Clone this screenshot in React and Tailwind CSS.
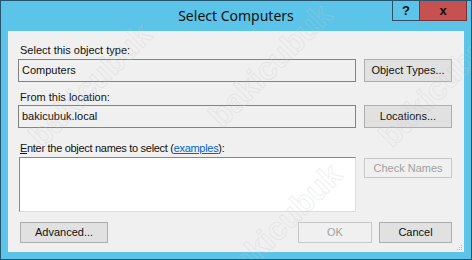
export default function App() {
  const wm = "text-[32px] font-bold text-transparent [-webkit-text-stroke:1px_rgba(200,200,200,0.3)] -rotate-45 whitespace-nowrap pointer-events-none select-none absolute [font-family:'Liberation_Sans',Arial,sans-serif]";
  return (
    <div className="relative w-[472px] h-[260px] overflow-hidden bg-[#5cc4e8] border border-[#24566f] flex flex-col [font-family:'Liberation_Sans',Arial,sans-serif] text-[11px] text-[#111]">
      {/* title bar */}
      <div className="relative h-[30px] shrink-0 flex items-center justify-center">
        <span className="text-[14px] text-[#111] [font-family:'Noto_Sans','Open_Sans',sans-serif] mt-[-1px]">Select Computers</span>
        <div className="absolute top-0 right-[4px] flex">
          <div className="w-[28px] h-[20px] border border-[#2b5168] border-t-0 flex items-center justify-center font-bold text-[13px] text-[#111]">?</div>
          <div className="w-[47px] h-[20px] bg-[#c75050] border-b border-r border-[#7a3030] flex items-center justify-center font-bold text-[13px] text-[#111]">x</div>
        </div>
      </div>
      {/* client */}
      <div className="relative mx-[7px] mb-[7px] flex-1 bg-[#f0f0f0] px-[10px] pt-[12px] flex flex-col">
        <div className="h-[14px] leading-[14px] pl-[2px]">Select this object type:</div>
        <div className="mt-[2px] flex gap-[8px]">
          <div className="w-[338px] h-[23px] border border-[#828282] bg-[#f0f0f0] px-[3px] leading-[21px]">Computers</div>
          <div className="w-[88px] h-[23px] border border-[#adadad] bg-[#e1e1e1] flex items-center justify-center">Object Types...</div>
        </div>
        <div className="mt-[8px] h-[14px] leading-[14px] pl-[2px]">From this location:</div>
        <div className="mt-[1px] flex gap-[8px]">
          <div className="w-[338px] h-[23px] border border-[#828282] bg-[#f0f0f0] px-[3px] leading-[21px]">bakicubuk.local</div>
          <div className="w-[88px] h-[23px] border border-[#adadad] bg-[#e1e1e1] flex items-center justify-center">Locations...</div>
        </div>
        <div className="mt-[13px] h-[14px] leading-[14px] pl-[2px] tracking-[-0.3px]">
          <span className="underline">E</span>nter the object names to select (<span className="text-[#0066cc] underline">examples</span>):
        </div>
        <div className="mt-[2px] flex">
          <div className="ml-[1px] w-[337px] h-[55px] bg-white border border-[#dcdcdc] border-t-[#828790] border-l-[#828790]"></div>
          <div className="ml-[8px] mt-[1px] w-[88px] h-[20px] border border-[#c8c8c8] bg-[#f0f0f0] text-[#a0a0a0] flex items-center justify-center">Check Names</div>
        </div>
        <div className="mt-[10px] flex">
          <div className="ml-[2px] w-[88px] h-[21px] border border-[#adadad] bg-[#e1e1e1] flex items-center justify-center">Advanced...</div>
          <div className="ml-auto w-[74px] h-[21px] border border-[#c8c8c8] bg-[#f0f0f0] text-[#a0a0a0] flex items-center justify-center">OK</div>
          <div className="ml-[7px] mr-[2px] w-[73px] h-[21px] border border-[#adadad] bg-[#e1e1e1] flex items-center justify-center">Cancel</div>
        </div>
        <div className="absolute right-[1px] bottom-[1px] w-[6px] h-[6px] grid grid-cols-3">
          <span></span><span></span><span className="w-[1px] h-[1px] bg-[#bcbcbc]"></span>
          <span></span><span className="w-[1px] h-[1px] bg-[#bcbcbc]"></span><span className="w-[1px] h-[1px] bg-[#bcbcbc]"></span>
          <span className="w-[1px] h-[1px] bg-[#bcbcbc]"></span><span className="w-[1px] h-[1px] bg-[#bcbcbc]"></span><span className="w-[1px] h-[1px] bg-[#bcbcbc]"></span>
        </div>
      </div>
      {/* watermarks */}
      <span aria-hidden="true" className={wm + " left-[10px] top-[60px]"}>bakicubuk</span>
      <span aria-hidden="true" className={wm + " left-[190px] top-[40px]"}>bakicubuk</span>
      <span aria-hidden="true" className={wm + " left-[360px] top-[60px]"}>bakicubuk</span>
      <span aria-hidden="true" className={wm + " left-[200px] top-[200px]"}>bakicubuk</span>
    </div>
  );
}
